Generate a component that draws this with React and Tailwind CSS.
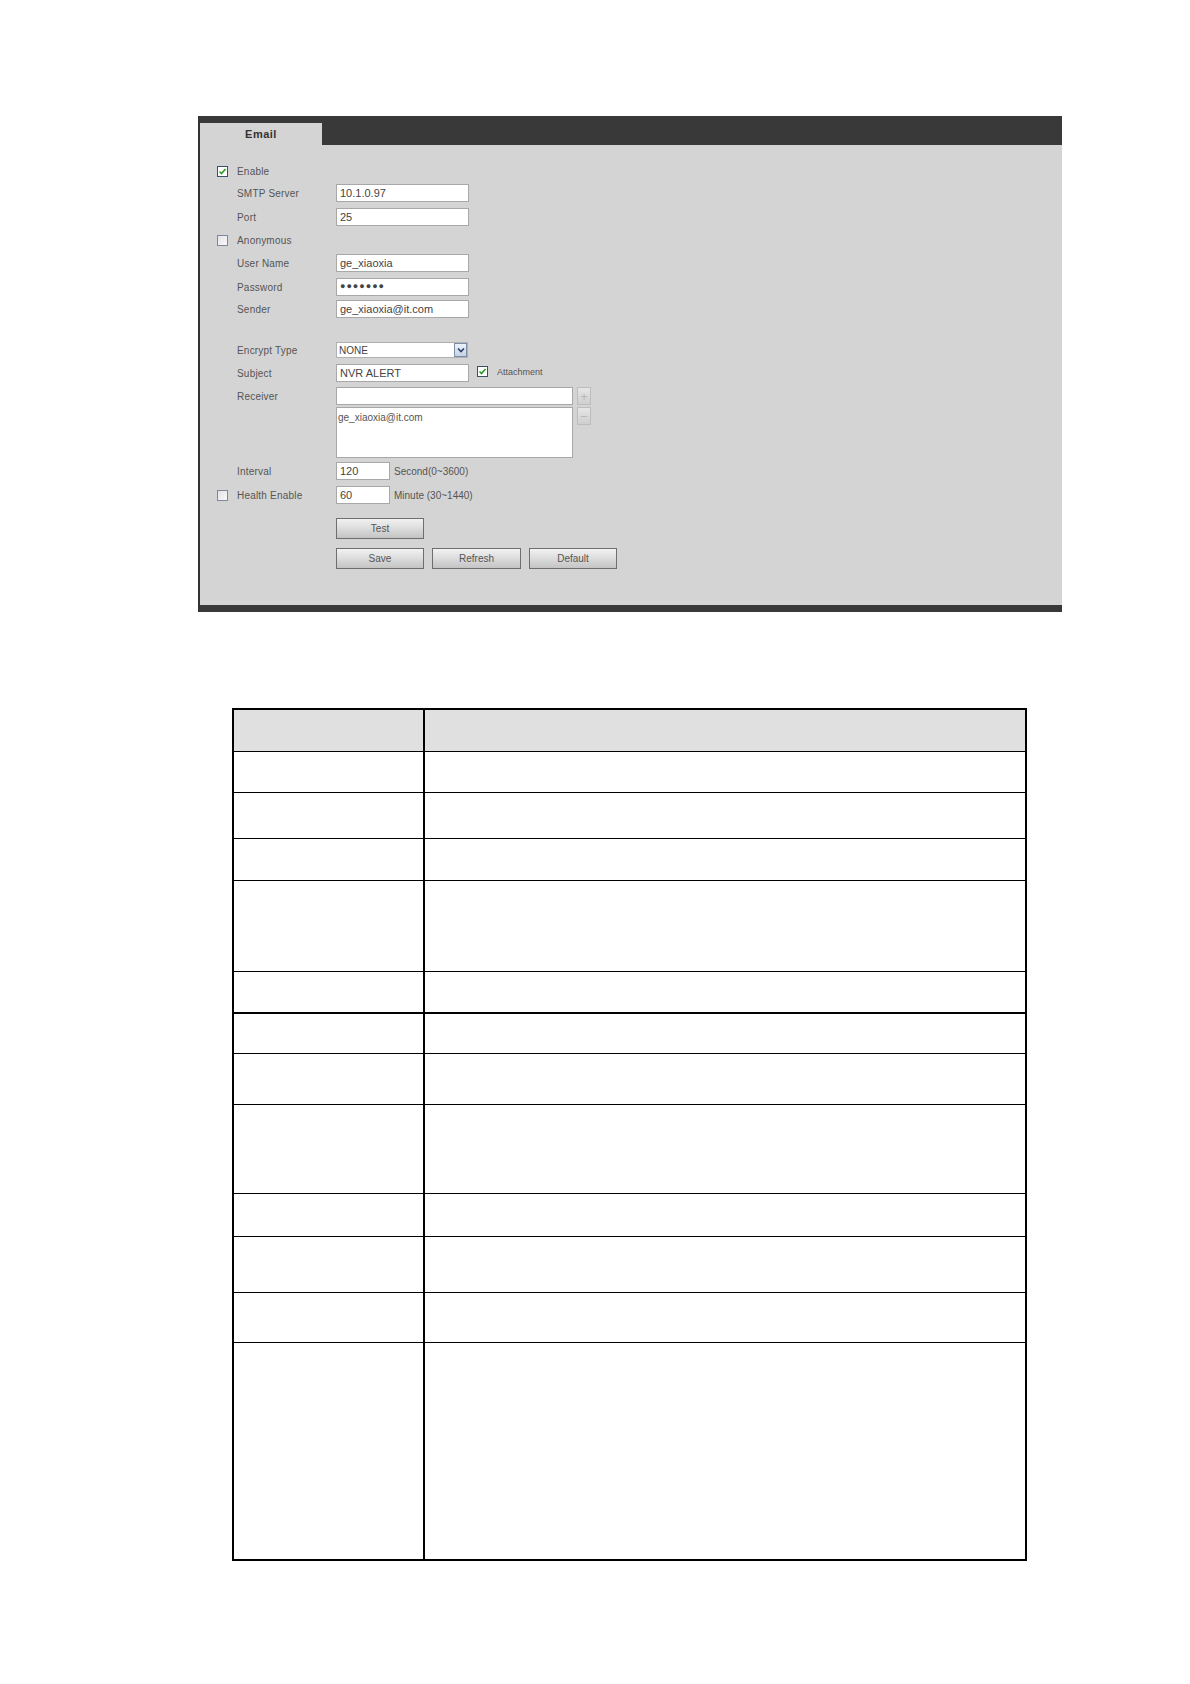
import React from 'react';

const font = { fontFamily: '"Liberation Sans", Arial, sans-serif' };

const CheckBox = ({ checked }) => (
    <div
        className={
            'w-[11px] h-[11px] border flex items-center justify-center ' +
            (checked
                ? 'border-[#3a4f6a] bg-white'
                : 'border-[#7a8a9c] bg-gradient-to-br from-[#e4e4e4] to-[#f8f8f8]')
        }
    >
        {checked && (
            <svg width="9" height="9" viewBox="0 0 9 9">
                <path d="M1.5 4.5 L3.5 6.5 L7.5 2" stroke="#2a9a2a" strokeWidth="1.6" fill="none" />
            </svg>
        )}
    </div>
);

const Label = ({ children }) => (
    <div className="w-[99px] text-[10px] text-[#555] tracking-[0.2px]">{children}</div>
);

const TextBox = ({ value, className = 'w-[133px]' }) => (
    <div
        className={
            'h-[18px] bg-white border border-[#a8a8a8] flex items-center px-[3px] text-[11px] text-[#444] ' +
            className
        }
    >
        {value}
    </div>
);

const Row = ({ check, label, children, className = '' }) => (
    <div className={'flex items-center h-[18px] ' + className}>
        <div className="w-[37px] pl-[17px]">{check !== undefined && <CheckBox checked={check} />}</div>
        <Label>{label}</Label>
        {children}
    </div>
);

const Button = ({ children, className = 'w-[88px]' }) => (
    <div
        className={
            'h-[21px] border border-[#6e6e6e] bg-gradient-to-b from-[#f2f2f2] via-[#dcdcdc] to-[#c4c4c4] flex items-center justify-center text-[10px] text-[#555] ' +
            className
        }
    >
        {children}
    </div>
);

const SmallBtn = ({ sign }) => (
    <div className="w-[14px] h-[18px] border border-[#bdbdbd] bg-gradient-to-b from-[#e6e6e6] to-[#cfcfcf] flex items-center justify-center text-[13px] leading-none text-[#b8b8b8]">
        {sign}
    </div>
);

const EmailPanel = () => (
    <div className="w-[864px] border-l-2 border-[#333] bg-[#d4d4d4]" style={font}>
        <div className="h-[29px] bg-[#393939] pt-[7px]">
            <div className="w-[122px] h-[22px] bg-[#d4d4d4] flex items-center justify-center text-[11px] font-bold text-[#333] tracking-[0.5px]">
                Email
            </div>
        </div>

        <div className="h-[460px] pt-[17px]">
            <Row check={true} label="Enable" />
            <Row label="SMTP Server" className="mt-[4px]">
                <TextBox value="10.1.0.97" />
            </Row>
            <Row label="Port" className="mt-[6px]">
                <TextBox value="25" />
            </Row>
            <Row check={false} label="Anonymous" className="mt-[5px]" />
            <Row label="User Name" className="mt-[5px]">
                <TextBox value="ge_xiaoxia" />
            </Row>
            <Row label="Password" className="mt-[6px]">
                <TextBox value={<span className="text-[9px] tracking-[1px]">●●●●●●●</span>} />
            </Row>
            <Row label="Sender" className="mt-[4px]">
                <TextBox value="ge_xiaoxia@it.com" />
            </Row>

            <Row label="Encrypt Type" className="mt-[23px]">
                <div className="w-[132px] h-[16px] bg-white border border-[#b0b0b0] flex items-center justify-between text-[10px] text-[#444]">
                    <span className="pl-[2px]">NONE</span>
                    <div className="w-[13px] h-[14px] border border-[#7d8fa8] bg-gradient-to-b from-[#eef3fa] to-[#c4d2e4] flex items-center justify-center">
                        <svg width="8" height="6" viewBox="0 0 8 6">
                            <path d="M1 1.5 L4 4.5 L7 1.5" stroke="#2b3f63" strokeWidth="1.6" fill="none" />
                        </svg>
                    </div>
                </div>
            </Row>
            <Row label="Subject" className="mt-[5px]">
                <TextBox value="NVR ALERT" />
                <div className="ml-[8px] mb-[3px]">
                    <CheckBox checked={true} />
                </div>
                <div className="ml-[9px] text-[9px] text-[#555]">Attachment</div>
            </Row>

            <div className="flex mt-[5px]">
                <div className="w-[37px]" />
                <div className="w-[99px] h-[18px] flex items-center">
                    <span className="text-[10px] text-[#555] tracking-[0.2px]">Receiver</span>
                </div>
                <div className="flex flex-col gap-[2px]">
                    <TextBox value="" className="w-[237px]" />
                    <div className="w-[237px] h-[51px] bg-white border border-[#a8a8a8] px-[1px] pt-[2px] text-[10px] text-[#555]">
                        ge_xiaoxia@it.com
                    </div>
                </div>
                <div className="ml-[4px] flex flex-col gap-[2px]">
                    <SmallBtn sign="+" />
                    <SmallBtn sign="−" />
                </div>
            </div>

            <Row label="Interval" className="mt-[4px]">
                <TextBox value="120" className="w-[54px]" />
                <span className="ml-[4px] text-[10px] text-[#555]">Second(0~3600)</span>
            </Row>
            <Row check={false} label="Health Enable" className="mt-[6px]">
                <TextBox value="60" className="w-[54px]" />
                <span className="ml-[4px] text-[10px] text-[#555]">Minute (30~1440)</span>
            </Row>

            <div className="pl-[136px] mt-[14px]">
                <Button>Test</Button>
                <div className="flex gap-[8px] mt-[9px]">
                    <Button>Save</Button>
                    <Button className="w-[89px]">Refresh</Button>
                    <Button>Default</Button>
                </div>
            </div>
        </div>

        <div className="h-[7px] bg-[#393939]" />
    </div>
);

const rowHeights = [41, 46, 42, 91, 41, 41, 51, 89, 43, 56, 50, 217];

const ParamTable = () => (
    <div className="w-[795px] border-2 border-black bg-white">
        <div className="flex h-[41px] bg-[#e0e0e0]">
            <div className="w-[191px] border-r-2 border-black" />
            <div className="flex-1" />
        </div>
        {rowHeights.map((h, i) => (
            <div
                key={i}
                className={'flex border-black ' + (i === 5 ? 'border-t-2' : 'border-t')}
                style={{ height: h }}
            >
                <div className="w-[191px] border-r-2 border-black" />
                <div className="flex-1" />
            </div>
        ))}
    </div>
);

export default function App() {
    return (
        <div className="w-[1190px] h-[1684px] bg-white">
            <div className="pt-[116px] pl-[198px]">
                <EmailPanel />
            </div>
            <div className="pt-[96px] pl-[232px]">
                <ParamTable />
            </div>
        </div>
    );
}
